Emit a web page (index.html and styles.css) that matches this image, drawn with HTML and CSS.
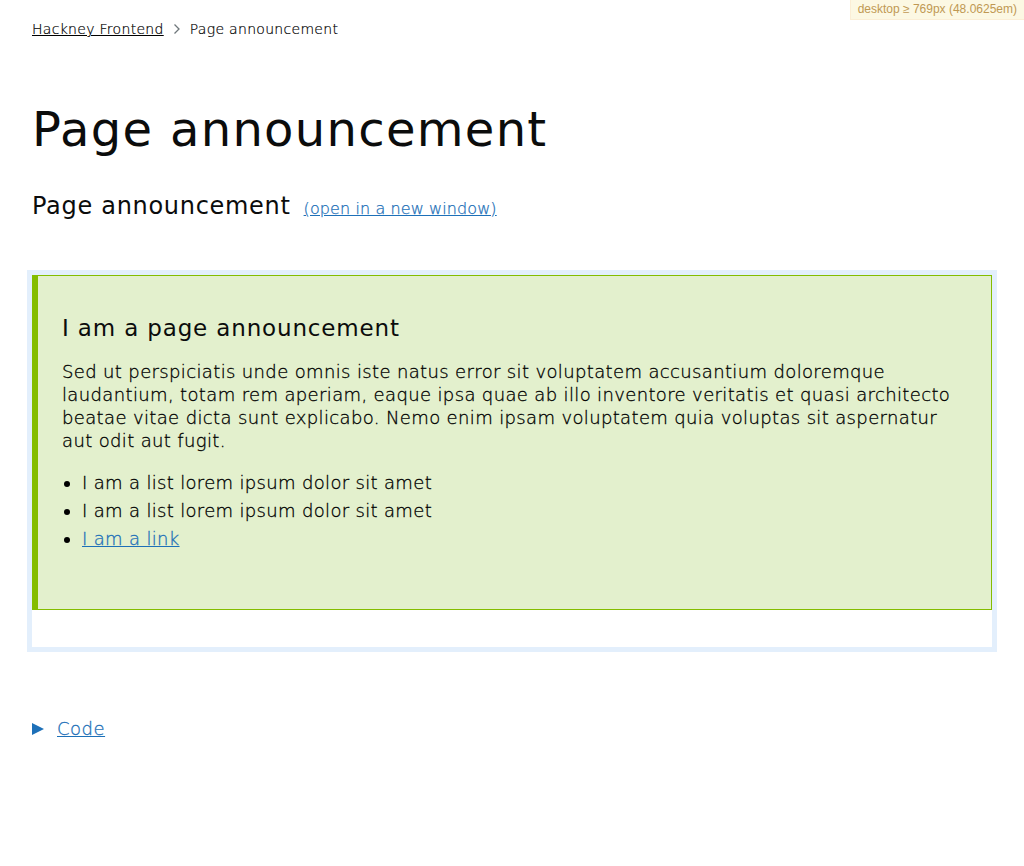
FILE: index.html
```html
<!DOCTYPE html>
<html lang="en">
<head>
<meta charset="utf-8">
<title>Page announcement</title>
<link rel="stylesheet" href="styles.css">
</head>
<body>
<div class="mq">desktop ≥ 769px (48.0625em)</div>
<div class="page">
  <nav class="crumbs">
    <a href="#" class="crumb-link">Hackney Frontend</a>
    <span class="chev">
      <svg width="8" height="12" viewBox="0 0 8 12"><path d="M1.5 1.5 L6 6 L1.5 10.5" fill="none" stroke="#6f777b" stroke-width="1.3"/></svg>
    </span>
    <span class="crumb-current">Page announcement</span>
  </nav>
  <h1 class="title">Page announcement</h1>
  <div class="example-head">
    <h2 class="example-title">Page announcement</h2>
    <a href="#" class="example-link">(open in a new window)</a>
  </div>
  <div class="frame">
    <section class="announcement">
      <h3 class="ann-title">I am a page announcement</h3>
      <p class="ann-text">Sed ut perspiciatis unde omnis iste natus error sit voluptatem accusantium doloremque laudantium, totam rem aperiam, eaque ipsa quae ab illo inventore veritatis et quasi architecto beatae vitae dicta sunt explicabo. Nemo enim ipsam voluptatem quia voluptas sit aspernatur aut odit aut fugit.</p>
      <ul class="ann-list">
        <li>I am a list lorem ipsum dolor sit amet</li>
        <li>I am a list lorem ipsum dolor sit amet</li>
        <li><a href="#" class="ann-link">I am a link</a></li>
      </ul>
    </section>
  </div>
  <div class="code">
    <span class="tri"></span>
    <a href="#" class="code-link">Code</a>
  </div>
</div>
</body>
</html>
```
FILE: styles.css
```css
html, body { margin: 0; padding: 0; background: #fff; }
body {
  font-family: "DejaVu Sans", sans-serif;
  color: #0b0c0c;
}
.mq {
  position: absolute;
  top: 0;
  right: 0;
  background: #fcf8e3;
  border-left: 1px solid #fbeed5;
  border-bottom: 1px solid #fbeed5;
  color: #c09853;
  font-family: "Liberation Sans", sans-serif;
  font-size: 12px;
  line-height: 19px;
  padding: 0 7px;
}
.page { padding: 0 32px; }
.crumbs {
  display: flex;
  align-items: center;
  padding-top: 20px;
  font-size: 14px;
  line-height: 18px;
  font-weight: 300;
  letter-spacing: 0.3px;
  color: #000;
  -webkit-text-stroke: 0.2px currentColor;
}
.crumb-link { color: #000; text-decoration: underline; }
.chev { display: inline-flex; margin: 0 9px 0 9px; }
.crumb-current { color: #000; }
.title {
  margin: 61px 0 0 0;
  font-size: 48px;
  line-height: 60px;
  font-weight: 400;
  letter-spacing: 1.3px;
}
.example-head {
  display: flex;
  align-items: baseline;
  margin-top: 32px;
}
.example-title {
  margin: 0;
  font-size: 24px;
  line-height: 30px;
  font-weight: 400;
  letter-spacing: 0.7px;
}
.example-link {
  margin-left: 13px;
  font-size: 16px;
  color: #1d70b8;
  font-weight: 300;
  letter-spacing: 0.1px;
  -webkit-text-stroke: 0.25px currentColor;
}
.frame {
  margin: 49px -5px 0 -5px;
  border: 5px solid #e3effc;
  padding-bottom: 37px;
}
.announcement {
  background: #e3f0cd;
  border: 1px solid #84bd00;
  border-left: 6px solid #84bd00;
  padding: 38px 24px 56px 24px;
}
.ann-title {
  margin: 0 0 18px 0;
  font-size: 23px;
  line-height: 28px;
  font-weight: 400;
  letter-spacing: 0.85px;
}
.ann-text {
  margin: 0 0 17px 0;
  font-size: 18px;
  line-height: 23px;
  font-weight: 300;
  letter-spacing: 0.36px;
  color: #000;
  -webkit-text-stroke: 0.3px currentColor;
}
.ann-list {
  margin: 0;
  padding-left: 20px;
  font-size: 18px;
  line-height: 28px;
  font-weight: 300;
  letter-spacing: 0.33px;
  color: #000;
  -webkit-text-stroke: 0.3px currentColor;
}
.ann-link { color: #1d70b8; }
.code {
  display: flex;
  align-items: center;
  margin-top: 65px;
  font-size: 18px;
  line-height: 24px;
  font-weight: 300;
  letter-spacing: 0.5px;
  -webkit-text-stroke: 0.3px currentColor;
}
.tri {
  width: 0;
  height: 0;
  border-top: 6px solid transparent;
  border-bottom: 6px solid transparent;
  border-left: 12px solid #1d70b8;
  margin-right: 13px;
}
.code-link { color: #1d70b8; }
```
